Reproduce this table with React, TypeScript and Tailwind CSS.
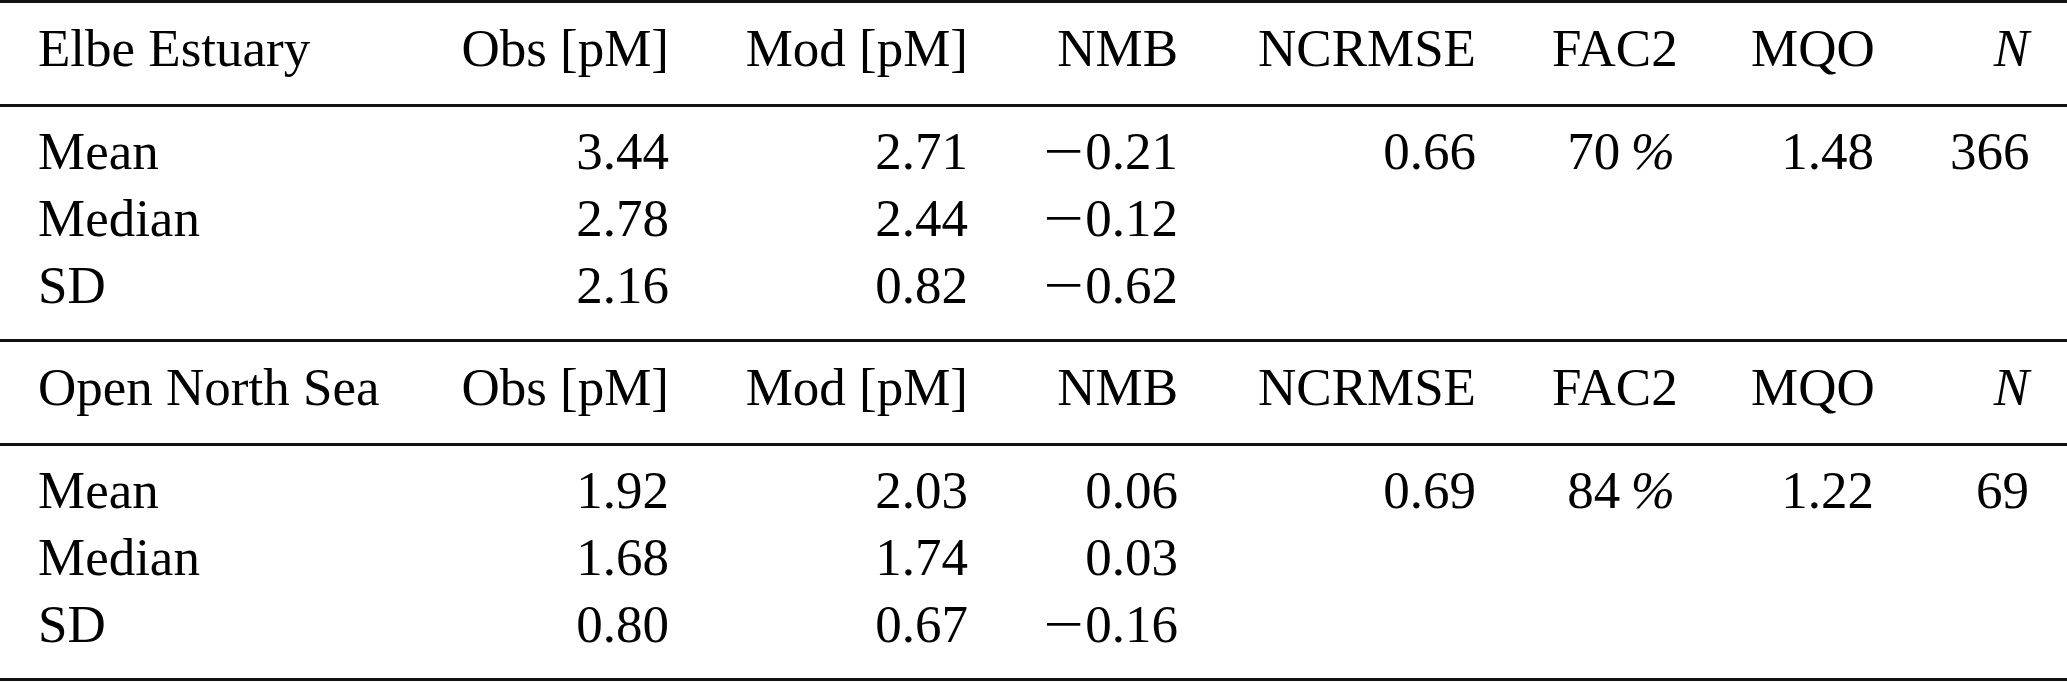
import React from 'react';

type Row = { label: string; obs: string; mod: string; nmb: string; ncrmse?: string; fac2?: string; mqo?: string; n?: string };
type Block = { site: string; rows: Row[] };

const BLOCKS: Block[] = [
  {
    site: "Elbe Estuary",
    rows: [
      { label: "Mean", obs: "3.44", mod: "2.71", nmb: "-0.21", ncrmse: "0.66", fac2: "70", mqo: "1.48", n: "366" },
      { label: "Median", obs: "2.78", mod: "2.44", nmb: "-0.12" },
      { label: "SD", obs: "2.16", mod: "0.82", nmb: "-0.62" },
    ],
  },
  {
    site: "Open North Sea",
    rows: [
      { label: "Mean", obs: "1.92", mod: "2.03", nmb: "0.06", ncrmse: "0.69", fac2: "84", mqo: "1.22", n: "69" },
      { label: "Median", obs: "1.68", mod: "1.74", nmb: "0.03" },
      { label: "SD", obs: "0.80", mod: "0.67", nmb: "-0.16" },
    ],
  },
];

const GRID = "grid grid-cols-[423px_284px_299px_210px_298px_199px_199px_155px] leading-[67px]";
const CELL = "px-[38px] text-right whitespace-nowrap";

function Rule() {
  return <div className="h-[3px] bg-[#111]" />;
}

// math-style minus: a bit longer than the text glyph, with a small gap after it
function Num({ v }: { v: string }) {
  if (!v.startsWith("-")) return <>{v}</>;
  return (
    <>
      <span className="inline-block scale-x-[1.35] mr-[6px]">{"\u2212"}</span>
      {v.slice(1)}
    </>
  );
}

export default function App() {
  return (
    <div className="w-[2067px] h-[682px] bg-white text-black text-[53px] font-['Liberation_Serif','Times_New_Roman',serif]">
      {BLOCKS.map((b) => (
        <div key={b.site}>
          <Rule />
          <div className={`${GRID} pt-[12px] pb-[22px]`}>
            <div className="px-[38px] whitespace-nowrap">{b.site}</div>
            <div className={CELL}>Obs [pM]</div>
            <div className={CELL}>Mod [pM]</div>
            <div className={CELL}>NMB</div>
            <div className={CELL}>NCRMSE</div>
            <div className={CELL}>FAC2</div>
            <div className={CELL}>MQO</div>
            <div className={`${CELL} italic`}>N</div>
          </div>
          <Rule />
          <div className="pt-[11px] pb-[20px]">
            {b.rows.map((r) => (
              <div key={r.label} className={GRID}>
                <div className="px-[38px] whitespace-nowrap">{r.label}</div>
                <div className={CELL}>{r.obs}</div>
                <div className={CELL}>{r.mod}</div>
                <div className={CELL}><Num v={r.nmb} /></div>
                <div className={CELL}>{r.ncrmse ?? ""}</div>
                <div className={CELL}>
                  {r.fac2 ? <>{r.fac2}{"\u2009"}<span className="italic">%</span></> : ""}
                </div>
                <div className={CELL}>{r.mqo ?? ""}</div>
                <div className={CELL}>{r.n ?? ""}</div>
              </div>
            ))}
          </div>
        </div>
      ))}
      <Rule />
    </div>
  );
}
